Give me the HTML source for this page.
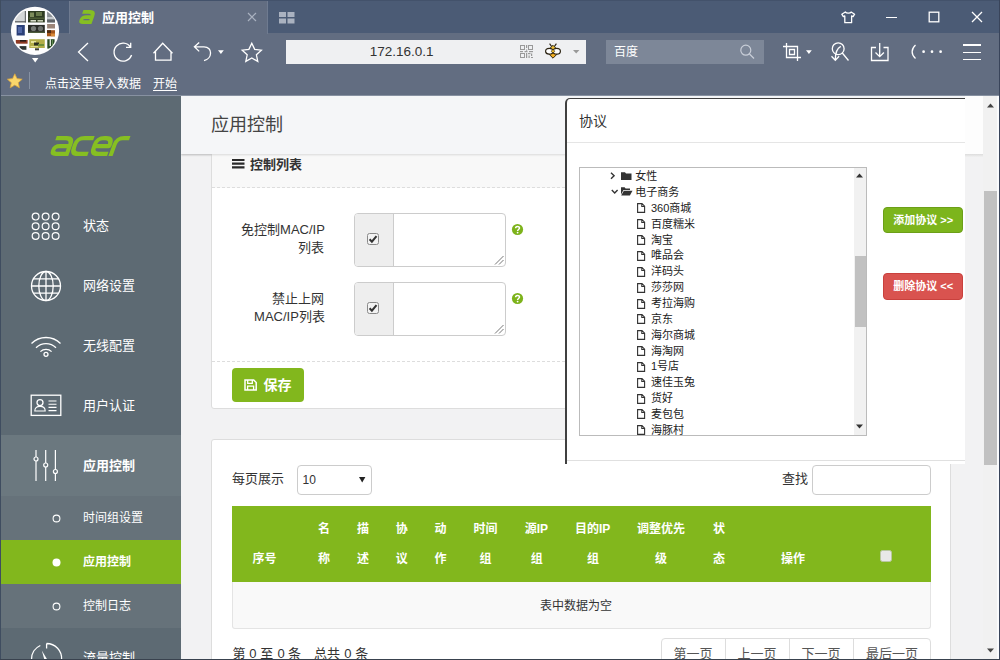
<!DOCTYPE html>
<html><head><meta charset="utf-8"><title>应用控制</title>
<style>
html,body{margin:0;padding:0}
body{width:1000px;height:660px;overflow:hidden;position:relative;background:#f1f1f1;font-family:"Liberation Sans","Noto Sans CJK SC",sans-serif}
#root{position:absolute;left:0;top:0;width:1000px;height:660px;overflow:hidden}
#root div,#root svg{position:absolute;display:block}
.t{white-space:nowrap;font-family:"Liberation Sans","Noto Sans CJK SC",sans-serif}
.t>span{position:absolute;left:0;top:0;white-space:nowrap}
</style></head><body>
<div id="root">
<div style="left:0px;top:96px;width:1000px;height:564px;background:#f2f2f3;"></div>
<div style="left:181px;top:96px;width:802px;height:58px;background:#f5f6f8;box-shadow:0 1px 2px rgba(0,0,0,.12);"></div>
<div class="t" style="left:211.00px;top:115.50px;font-size:18.00px;line-height:18.00px;color:#444;"><span>应用控制</span></div>
<div style="left:211px;top:140px;width:740px;height:269px;background:#fff;border:1px solid #ddd;border-radius:3px;box-sizing:border-box;"></div>
<div style="left:212px;top:154px;width:738px;height:34px;background:#f8f8f8;"></div>
<div style="left:212px;top:187px;width:738px;height:0px;border-top:1px dashed #ddd;"></div>
<div style="left:212px;top:361px;width:738px;height:0px;border-top:1px dashed #ddd;"></div>
<div style="left:181px;top:96px;width:802px;height:58px;background:#f5f6f8;box-shadow:0 1px 2px rgba(0,0,0,.12);"></div>
<div class="t" style="left:211.00px;top:115.50px;font-size:18.00px;line-height:18.00px;color:#444;"><span>应用控制</span></div>
<svg style="left:232px;top:159px;" width="13" height="10" viewBox="0 0 13 10"><path d="M0 1h12.5M0 4.7h12.5M0 8.4h12.5" stroke="#2a2a2a" stroke-width="2.200"/></svg>
<div class="t" style="left:250.00px;top:158.00px;font-size:13.00px;line-height:13.00px;color:#333;font-weight:bold;"><span>控制列表</span></div>
<div class="t" style="left:241.11px;top:222.50px;font-size:13.00px;line-height:13.00px;color:#333;"><span>免控制MAC/IP</span></div>
<div class="t" style="left:298.00px;top:240.50px;font-size:13.00px;line-height:13.00px;color:#333;"><span>列表</span></div>
<div class="t" style="left:272.00px;top:291.50px;font-size:13.00px;line-height:13.00px;color:#333;"><span>禁止上网</span></div>
<div class="t" style="left:254.11px;top:309.50px;font-size:13.00px;line-height:13.00px;color:#333;"><span>MAC/IP列表</span></div>
<div style="left:354px;top:213px;width:152px;height:54px;background:#fff;border:1px solid #ccc;border-radius:4px;box-sizing:border-box;"></div>
<div style="left:355px;top:214px;width:37.5px;height:52px;background:#eee;border-right:1px solid #ccc;border-radius:3px 0 0 3px;"></div>
<svg style="left:367px;top:233px;" width="12" height="12" viewBox="0 0 12 12"><rect x=".5" y=".5" width="11" height="11" rx="2" fill="#f3f3f3" stroke="#8a8a8a"/><path d="M2.6 6.2l2.3 2.5 4.6-5.6" fill="none" stroke="#333" stroke-width="2"/></svg>
<svg style="left:494px;top:255px;" width="10" height="10" viewBox="0 0 10 10"><path d="M1 9.5L9.5 1M5 9.5L9.5 5" stroke="#777" stroke-width="1"/></svg>
<svg style="left:511px;top:223px;" width="13" height="13" viewBox="0 0 13 13"><circle cx="6.5" cy="6.5" r="5.6" fill="#7db31b"/><path d="M4.6 5.2c0-2.4 3.9-2.4 3.9-.1 0 1.4-1.9 1.4-1.9 2.8" fill="none" stroke="#fff" stroke-width="1.5"/><circle cx="6.6" cy="9.6" r=".9" fill="#fff"/></svg>
<div style="left:354px;top:282px;width:152px;height:54px;background:#fff;border:1px solid #ccc;border-radius:4px;box-sizing:border-box;"></div>
<div style="left:355px;top:283px;width:37.5px;height:52px;background:#eee;border-right:1px solid #ccc;border-radius:3px 0 0 3px;"></div>
<svg style="left:367px;top:302px;" width="12" height="12" viewBox="0 0 12 12"><rect x=".5" y=".5" width="11" height="11" rx="2" fill="#f3f3f3" stroke="#8a8a8a"/><path d="M2.6 6.2l2.3 2.5 4.6-5.6" fill="none" stroke="#333" stroke-width="2"/></svg>
<svg style="left:494px;top:324px;" width="10" height="10" viewBox="0 0 10 10"><path d="M1 9.5L9.5 1M5 9.5L9.5 5" stroke="#777" stroke-width="1"/></svg>
<svg style="left:511px;top:292px;" width="13" height="13" viewBox="0 0 13 13"><circle cx="6.5" cy="6.5" r="5.6" fill="#7db31b"/><path d="M4.6 5.2c0-2.4 3.9-2.4 3.9-.1 0 1.4-1.9 1.4-1.9 2.8" fill="none" stroke="#fff" stroke-width="1.5"/><circle cx="6.6" cy="9.6" r=".9" fill="#fff"/></svg>
<div style="left:232px;top:368px;width:72px;height:34px;background:#82b71d;border-radius:4px;"></div>
<svg style="left:244px;top:379px;" width="14" height="12" viewBox="0 0 14 12"><path d="M1 1h8.700l2.500 2.500v7.500h-11.200z" fill="none" stroke="#fff" stroke-width="1.500"/><path d="M3.700 1v3.300h4.600v-3.300M3.600 11v-3.800h6v3.800" fill="none" stroke="#fff" stroke-width="1.300"/></svg>
<div class="t" style="left:263.50px;top:378.00px;font-size:14.00px;line-height:14.00px;color:#fff;font-weight:bold;"><span>保存</span></div>
<div style="left:211px;top:439px;width:740px;height:260px;background:#fff;border:1px solid #ddd;border-radius:3px;box-sizing:border-box;"></div>
<div class="t" style="left:232.00px;top:471.50px;font-size:13.00px;line-height:13.00px;color:#333;"><span>每页展示</span></div>
<div style="left:297px;top:465px;width:75px;height:30px;background:#fff;border:1px solid #ccc;border-radius:4px;box-sizing:border-box;"></div>
<div class="t" style="left:302.50px;top:474.00px;font-size:12.00px;line-height:12.00px;color:#333;"><span>10</span></div>
<svg style="left:359px;top:477px;" width="7" height="6" viewBox="0 0 7 6"><path d="M0 0h6.400L3.200 5.600z" fill="#222"/></svg>
<div class="t" style="left:782.00px;top:471.50px;font-size:13.00px;line-height:13.00px;color:#333;"><span>查找</span></div>
<div style="left:812px;top:465px;width:119px;height:30px;background:#fff;border:1px solid #ccc;border-radius:4px;box-sizing:border-box;"></div>
<div style="left:232px;top:506px;width:699px;height:76px;background:#82b71d;"></div>
<div style="left:232px;top:582px;width:699px;height:47px;background:#f9f9f9;border:1px solid #e4e4e4;border-top:0;box-sizing:border-box;border-radius:0 0 3px 3px;"></div>
<div class="t" style="left:252.60px;top:552.50px;font-size:12.00px;line-height:12.00px;color:#fff;font-weight:bold;"><span>序号</span></div>
<div class="t" style="left:318.00px;top:522.50px;font-size:12.00px;line-height:12.00px;color:#fff;font-weight:bold;"><span>名</span></div>
<div class="t" style="left:318.00px;top:552.50px;font-size:12.00px;line-height:12.00px;color:#fff;font-weight:bold;"><span>称</span></div>
<div class="t" style="left:357.00px;top:522.50px;font-size:12.00px;line-height:12.00px;color:#fff;font-weight:bold;"><span>描</span></div>
<div class="t" style="left:357.00px;top:552.50px;font-size:12.00px;line-height:12.00px;color:#fff;font-weight:bold;"><span>述</span></div>
<div class="t" style="left:395.70px;top:522.50px;font-size:12.00px;line-height:12.00px;color:#fff;font-weight:bold;"><span>协</span></div>
<div class="t" style="left:395.70px;top:552.50px;font-size:12.00px;line-height:12.00px;color:#fff;font-weight:bold;"><span>议</span></div>
<div class="t" style="left:434.60px;top:522.50px;font-size:12.00px;line-height:12.00px;color:#fff;font-weight:bold;"><span>动</span></div>
<div class="t" style="left:434.60px;top:552.50px;font-size:12.00px;line-height:12.00px;color:#fff;font-weight:bold;"><span>作</span></div>
<div class="t" style="left:473.60px;top:522.50px;font-size:12.00px;line-height:12.00px;color:#fff;font-weight:bold;"><span>时间</span></div>
<div class="t" style="left:479.60px;top:552.50px;font-size:12.00px;line-height:12.00px;color:#fff;font-weight:bold;"><span>组</span></div>
<div class="t" style="left:524.72px;top:522.50px;font-size:12.00px;line-height:12.00px;color:#fff;font-weight:bold;"><span>源IP</span></div>
<div class="t" style="left:530.70px;top:552.50px;font-size:12.00px;line-height:12.00px;color:#fff;font-weight:bold;"><span>组</span></div>
<div class="t" style="left:575.02px;top:522.50px;font-size:12.00px;line-height:12.00px;color:#fff;font-weight:bold;"><span>目的IP</span></div>
<div class="t" style="left:587.00px;top:552.50px;font-size:12.00px;line-height:12.00px;color:#fff;font-weight:bold;"><span>组</span></div>
<div class="t" style="left:637.00px;top:522.50px;font-size:12.00px;line-height:12.00px;color:#fff;font-weight:bold;"><span>调整优先</span></div>
<div class="t" style="left:655.00px;top:552.50px;font-size:12.00px;line-height:12.00px;color:#fff;font-weight:bold;"><span>级</span></div>
<div class="t" style="left:713.00px;top:522.50px;font-size:12.00px;line-height:12.00px;color:#fff;font-weight:bold;"><span>状</span></div>
<div class="t" style="left:713.00px;top:552.50px;font-size:12.00px;line-height:12.00px;color:#fff;font-weight:bold;"><span>态</span></div>
<div class="t" style="left:781.00px;top:552.50px;font-size:12.00px;line-height:12.00px;color:#fff;font-weight:bold;"><span>操作</span></div>
<svg style="left:880px;top:550px;" width="12" height="12" viewBox="0 0 12 12"><rect x=".5" y=".5" width="11" height="11" rx="2" fill="#e8e8e8" stroke="#b9c7a0"/></svg>
<div class="t" style="left:540.00px;top:600.00px;font-size:12.00px;line-height:12.00px;color:#333;"><span>表中数据为空</span></div>
<div class="t" style="left:232.50px;top:646.50px;font-size:13.00px;line-height:13.00px;color:#333;"><span>第</span></div>
<div class="t" style="left:249.30px;top:646.50px;font-size:13.00px;line-height:13.00px;color:#333;"><span>0</span></div>
<div class="t" style="left:260.30px;top:646.50px;font-size:13.00px;line-height:13.00px;color:#333;"><span>至</span></div>
<div class="t" style="left:277.50px;top:646.50px;font-size:13.00px;line-height:13.00px;color:#333;"><span>0</span></div>
<div class="t" style="left:288.00px;top:646.50px;font-size:13.00px;line-height:13.00px;color:#333;"><span>条</span></div>
<div class="t" style="left:314.00px;top:646.50px;font-size:13.00px;line-height:13.00px;color:#333;"><span>总共</span></div>
<div class="t" style="left:344.20px;top:646.50px;font-size:13.00px;line-height:13.00px;color:#333;"><span>0</span></div>
<div class="t" style="left:355.30px;top:646.50px;font-size:13.00px;line-height:13.00px;color:#333;"><span>条</span></div>
<div style="left:661px;top:638px;width:270px;height:34px;background:#fff;border:1px solid #ddd;border-radius:4px;box-sizing:border-box;"></div>
<div style="left:725px;top:639px;width:1px;height:32px;background:#ddd;"></div>
<div style="left:789px;top:639px;width:1px;height:32px;background:#ddd;"></div>
<div style="left:853px;top:639px;width:1px;height:32px;background:#ddd;"></div>
<div class="t" style="left:673.50px;top:646.50px;font-size:13.00px;line-height:13.00px;color:#555;"><span>第一页</span></div>
<div class="t" style="left:737.50px;top:646.50px;font-size:13.00px;line-height:13.00px;color:#555;"><span>上一页</span></div>
<div class="t" style="left:801.50px;top:646.50px;font-size:13.00px;line-height:13.00px;color:#555;"><span>下一页</span></div>
<div class="t" style="left:866.00px;top:646.50px;font-size:13.00px;line-height:13.00px;color:#555;"><span>最后一页</span></div>
<div style="left:0px;top:96px;width:181px;height:564px;background:#5d6a73;"></div>
<div style="left:0px;top:435px;width:181px;height:61px;background:#6b787f;"></div>
<div style="left:0px;top:496px;width:181px;height:132px;background:#66727a;"></div>
<div style="left:0px;top:540px;width:181px;height:44px;background:#82b71d;"></div>
<svg style="left:49.3px;top:136px;overflow:visible;" width="86.9" height="20" viewBox="0 0 86.9 20"><g transform="translate(7.3,0) scale(1) skewX(-20)" fill="none" stroke="#86bf22" stroke-width="4.2" stroke-linejoin="round"><path d="M0.5 2.1H10.6Q17.1 2.1 17.1 8.6V20M17.1 10.2H6.6Q2.1 10.2 2.1 14.05Q2.1 17.9 6.6 17.9H17.1"/><path d="M38.4 2.1H28.4Q21.9 2.1 21.9 8.6V11.4Q21.9 17.9 28.4 17.9H38.2"/><path d="M41.7 10.2H56.7V8.6Q56.7 2.1 50.2 2.1H48.2Q41.7 2.1 41.7 8.6V11.4Q41.7 17.9 48.2 17.9H58"/><path d="M61.5 20V8.6Q61.5 2.1 68 2.1H74.2"/></g></svg>
<svg style="left:31px;top:211.5px;" width="30" height="30" viewBox="0 0 30 30"><g fill="none" stroke="#fff" stroke-width="1.2"><circle cx="4.6" cy="4.6" r="3.4"/><circle cx="4.6" cy="14.3" r="3.4"/><circle cx="4.6" cy="24" r="3.4"/><circle cx="14.6" cy="4.6" r="3.4"/><circle cx="14.6" cy="14.3" r="3.4"/><circle cx="14.6" cy="24" r="3.4"/><circle cx="24.6" cy="4.6" r="3.4"/><circle cx="24.6" cy="14.3" r="3.4"/><circle cx="24.6" cy="24" r="3.4"/></g></svg>
<div class="t" style="left:83.00px;top:219.00px;font-size:13.00px;line-height:13.00px;color:#fff;"><span>状态</span></div>
<svg style="left:30px;top:269.5px;" width="32" height="32" viewBox="0 0 32 32"><g fill="none" stroke="#fff" stroke-width="1.3"><circle cx="16" cy="16" r="14.5"/><ellipse cx="16" cy="16" rx="7.2" ry="14.5"/><path d="M16 1.5v29M1.5 16h29M3.8 8.800h24.400M3.800 23.200h24.400"/></g></svg>
<div class="t" style="left:83.00px;top:279.00px;font-size:13.00px;line-height:13.00px;color:#fff;"><span>网络设置</span></div>
<svg style="left:30px;top:334px;" width="32" height="24" viewBox="0 0 32 24"><g fill="none" stroke="#fff" stroke-width="1.3"><path d="M1.5 9.5a20.5 20.5 0 0 1 29 0M6 13.7a14.2 14.2 0 0 1 20 0M10.4 17.6a8 8 0 0 1 11.2 0"/><circle cx="16" cy="20.3" r="2"/></g></svg>
<div class="t" style="left:83.00px;top:339.00px;font-size:13.00px;line-height:13.00px;color:#fff;"><span>无线配置</span></div>
<svg style="left:30px;top:394px;" width="32" height="23" viewBox="0 0 32 23"><g fill="none" stroke="#fff" stroke-width="1.3"><rect x="1.2" y="1.2" width="29.6" height="20.2"/><circle cx="10" cy="8.6" r="3"/><path d="M4.8 17c0-3.5 2.2-4.6 5.2-4.6s5.200 1.100 5.200 4.600zM18.500 7h8M18.500 10.200h8M18.500 13.400h8M18.500 16.600h8" stroke-width="1.1"/></g></svg>
<div class="t" style="left:83.00px;top:399.00px;font-size:13.00px;line-height:13.00px;color:#fff;"><span>用户认证</span></div>
<svg style="left:31px;top:449px;" width="30" height="33" viewBox="0 0 30 33"><g fill="none" stroke="#fff" stroke-width="1.2"><path d="M5 1v7M5 12v20M14.700 1v13M14.700 18v14M24.400 1v19.500M24.400 24.500v7.500"/><circle cx="5" cy="10" r="2"/><circle cx="14.700" cy="16" r="2"/><circle cx="24.400" cy="22.500" r="2"/></g></svg>
<div class="t" style="left:83.00px;top:459.00px;font-size:13.00px;line-height:13.00px;color:#fff;font-weight:bold;"><span>应用控制</span></div>
<svg style="left:52px;top:513.5px;" width="9" height="9" viewBox="0 0 9 9"><circle cx="4.5" cy="4.5" r="3.4" fill="none" stroke="#fff" stroke-width="1.1"/></svg>
<div class="t" style="left:83.00px;top:512.00px;font-size:12.00px;line-height:12.00px;color:#fff;"><span>时间组设置</span></div>
<svg style="left:52px;top:557.5px;" width="9" height="9" viewBox="0 0 9 9"><circle cx="4.5" cy="4.5" r="4" fill="#fff"/></svg>
<div class="t" style="left:83.00px;top:556.00px;font-size:12.00px;line-height:12.00px;color:#fff;font-weight:bold;"><span>应用控制</span></div>
<svg style="left:52px;top:601.5px;" width="9" height="9" viewBox="0 0 9 9"><circle cx="4.5" cy="4.5" r="3.4" fill="none" stroke="#fff" stroke-width="1.1"/></svg>
<div class="t" style="left:83.00px;top:600.00px;font-size:12.00px;line-height:12.00px;color:#fff;"><span>控制日志</span></div>
<svg style="left:30px;top:641px;" width="33" height="19" viewBox="0 0 33 19"><g fill="none" stroke="#fff" stroke-width="1.3"><path d="M1.500 18.500A15 15 0 0 1 10.300 4.500M16.600 2.500v5M16.600 2.500A15 15 0 0 1 31.600 18.500"/><path d="M11.800 9.500l5.700 9.500h-3z" fill="#fff" stroke="none"/></g></svg>
<div class="t" style="left:83.00px;top:650.80px;font-size:13.00px;line-height:13.00px;color:#fff;"><span>流量控制</span></div>
<div style="left:565px;top:98px;width:400px;height:366px;background:#fff;border-left:2px solid #404040;border-top:1px solid #404040;border-radius:5px 0 0 0;box-sizing:border-box;"></div>
<div style="left:567px;top:142px;width:398px;height:1px;background:#e5e5e5;"></div>
<div style="left:567px;top:460px;width:398px;height:1px;background:#e0e0e0;"></div>
<div class="t" style="left:579.00px;top:113.50px;font-size:14.00px;line-height:14.00px;color:#333;"><span>协议</span></div>
<div style="left:579px;top:167px;width:288px;height:269px;background:#fff;border:1px solid #bbb;box-sizing:border-box;"></div>
<div style="left:854px;top:168px;width:12px;height:267px;background:#f1f1f1;"></div>
<div style="left:855px;top:256px;width:11px;height:71px;background:#c1c1c1;"></div>
<svg style="left:856px;top:173px;" width="8" height="5" viewBox="0 0 8 5"><path d="M0 4.500h7L3.500 .5z" fill="#333"/></svg>
<svg style="left:856px;top:424px;" width="8" height="5" viewBox="0 0 8 5"><path d="M0 .5h7L3.500 4.500z" fill="#333"/></svg>
<div style="left:580px;top:168px;width:274px;height:267px;overflow:hidden">
<svg style="left:30.3px;top:4px;" width="6" height="8" viewBox="0 0 6 8"><path d="M1 .8l3.100 3l-3.100 3" fill="none" stroke="#333" stroke-width="1.4"/></svg>
<svg style="left:41.2px;top:2.7px;" width="12" height="10" viewBox="0 0 12 10"><path d="M0 1.200h4l1 1.300h5.500v6.500h-10.500z" fill="#333"/></svg>
<div class="t" style="left:55.30px;top:3.20px;font-size:11.00px;line-height:11.00px;color:#222;"><span>女性</span></div>
<svg style="left:31.2px;top:21.15px;" width="8" height="6" viewBox="0 0 8 6"><path d="M.8 1l2.900 3l2.900 -3" fill="none" stroke="#333" stroke-width="1.4"/></svg>
<svg style="left:41px;top:18.25px;" width="12" height="10" viewBox="0 0 12 10"><path d="M0 1.200h3.600l1 1.300h4.400v1.500h-6.500l-2.500 4.500z" fill="#333"/><path d="M2.800 4.800h8.700l-2.600 4.700h-8.700z" fill="#333"/></svg>
<div class="t" style="left:55.30px;top:19.05px;font-size:11.00px;line-height:11.00px;color:#222;"><span>电子商务</span></div>
<svg style="left:57px;top:35.4px;" width="9" height="11" viewBox="0 0 9 11"><path d="M.6 .6h4.400l2.600 2.600v6.200h-7zM4.800 .8v2.700h2.700" fill="none" stroke="#333" stroke-width="1.1"/></svg>
<div class="t" style="left:71.00px;top:34.90px;font-size:11.00px;line-height:11.00px;color:#222;"><span>360商城</span></div>
<svg style="left:57px;top:51.25px;" width="9" height="11" viewBox="0 0 9 11"><path d="M.6 .6h4.400l2.600 2.600v6.200h-7zM4.800 .8v2.700h2.700" fill="none" stroke="#333" stroke-width="1.1"/></svg>
<div class="t" style="left:71.00px;top:50.75px;font-size:11.00px;line-height:11.00px;color:#222;"><span>百度糯米</span></div>
<svg style="left:57px;top:67.1px;" width="9" height="11" viewBox="0 0 9 11"><path d="M.6 .6h4.400l2.600 2.600v6.200h-7zM4.800 .8v2.700h2.700" fill="none" stroke="#333" stroke-width="1.1"/></svg>
<div class="t" style="left:71.00px;top:66.60px;font-size:11.00px;line-height:11.00px;color:#222;"><span>淘宝</span></div>
<svg style="left:57px;top:82.95px;" width="9" height="11" viewBox="0 0 9 11"><path d="M.6 .6h4.400l2.600 2.600v6.200h-7zM4.800 .8v2.700h2.700" fill="none" stroke="#333" stroke-width="1.1"/></svg>
<div class="t" style="left:71.00px;top:82.45px;font-size:11.00px;line-height:11.00px;color:#222;"><span>唯品会</span></div>
<svg style="left:57px;top:98.8px;" width="9" height="11" viewBox="0 0 9 11"><path d="M.6 .6h4.400l2.600 2.600v6.200h-7zM4.800 .8v2.700h2.700" fill="none" stroke="#333" stroke-width="1.1"/></svg>
<div class="t" style="left:71.00px;top:98.30px;font-size:11.00px;line-height:11.00px;color:#222;"><span>洋码头</span></div>
<svg style="left:57px;top:114.65px;" width="9" height="11" viewBox="0 0 9 11"><path d="M.6 .6h4.400l2.600 2.600v6.200h-7zM4.800 .8v2.700h2.700" fill="none" stroke="#333" stroke-width="1.1"/></svg>
<div class="t" style="left:71.00px;top:114.15px;font-size:11.00px;line-height:11.00px;color:#222;"><span>莎莎网</span></div>
<svg style="left:57px;top:130.5px;" width="9" height="11" viewBox="0 0 9 11"><path d="M.6 .6h4.400l2.600 2.600v6.200h-7zM4.800 .8v2.700h2.700" fill="none" stroke="#333" stroke-width="1.1"/></svg>
<div class="t" style="left:71.00px;top:130.00px;font-size:11.00px;line-height:11.00px;color:#222;"><span>考拉海购</span></div>
<svg style="left:57px;top:146.35px;" width="9" height="11" viewBox="0 0 9 11"><path d="M.6 .6h4.400l2.600 2.600v6.200h-7zM4.800 .8v2.700h2.700" fill="none" stroke="#333" stroke-width="1.1"/></svg>
<div class="t" style="left:71.00px;top:145.85px;font-size:11.00px;line-height:11.00px;color:#222;"><span>京东</span></div>
<svg style="left:57px;top:162.2px;" width="9" height="11" viewBox="0 0 9 11"><path d="M.6 .6h4.400l2.600 2.600v6.200h-7zM4.800 .8v2.700h2.700" fill="none" stroke="#333" stroke-width="1.1"/></svg>
<div class="t" style="left:71.00px;top:161.70px;font-size:11.00px;line-height:11.00px;color:#222;"><span>海尔商城</span></div>
<svg style="left:57px;top:178.05px;" width="9" height="11" viewBox="0 0 9 11"><path d="M.6 .6h4.400l2.600 2.600v6.200h-7zM4.800 .8v2.700h2.700" fill="none" stroke="#333" stroke-width="1.1"/></svg>
<div class="t" style="left:71.00px;top:177.55px;font-size:11.00px;line-height:11.00px;color:#222;"><span>海淘网</span></div>
<svg style="left:57px;top:193.9px;" width="9" height="11" viewBox="0 0 9 11"><path d="M.6 .6h4.400l2.600 2.600v6.200h-7zM4.800 .8v2.700h2.700" fill="none" stroke="#333" stroke-width="1.1"/></svg>
<div class="t" style="left:71.00px;top:193.40px;font-size:11.00px;line-height:11.00px;color:#222;"><span>1号店</span></div>
<svg style="left:57px;top:209.75px;" width="9" height="11" viewBox="0 0 9 11"><path d="M.6 .6h4.400l2.600 2.600v6.200h-7zM4.800 .8v2.700h2.700" fill="none" stroke="#333" stroke-width="1.1"/></svg>
<div class="t" style="left:71.00px;top:209.25px;font-size:11.00px;line-height:11.00px;color:#222;"><span>速佳玉兔</span></div>
<svg style="left:57px;top:225.6px;" width="9" height="11" viewBox="0 0 9 11"><path d="M.6 .6h4.400l2.600 2.600v6.200h-7zM4.800 .8v2.700h2.700" fill="none" stroke="#333" stroke-width="1.1"/></svg>
<div class="t" style="left:71.00px;top:225.10px;font-size:11.00px;line-height:11.00px;color:#222;"><span>货好</span></div>
<svg style="left:57px;top:241.45px;" width="9" height="11" viewBox="0 0 9 11"><path d="M.6 .6h4.400l2.600 2.600v6.200h-7zM4.800 .8v2.700h2.700" fill="none" stroke="#333" stroke-width="1.1"/></svg>
<div class="t" style="left:71.00px;top:240.95px;font-size:11.00px;line-height:11.00px;color:#222;"><span>麦包包</span></div>
<svg style="left:57px;top:257.3px;" width="9" height="11" viewBox="0 0 9 11"><path d="M.6 .6h4.400l2.600 2.600v6.200h-7zM4.800 .8v2.700h2.700" fill="none" stroke="#333" stroke-width="1.1"/></svg>
<div class="t" style="left:71.00px;top:256.80px;font-size:11.00px;line-height:11.00px;color:#222;"><span>海豚村</span></div>
</div>
<div style="left:883px;top:207px;width:80px;height:26px;background:#7cb51c;border:1px solid #6c9f18;border-radius:4px;box-sizing:border-box;"></div>
<div class="t" style="left:893.26px;top:214.50px;font-size:11.00px;line-height:11.00px;color:#fff;font-weight:bold;"><span>添加协议 &gt;&gt;</span></div>
<div style="left:883px;top:273px;width:80px;height:27px;background:#d9534f;border:1px solid #c9413d;border-radius:4px;box-sizing:border-box;"></div>
<div class="t" style="left:893.26px;top:281.00px;font-size:11.00px;line-height:11.00px;color:#fff;font-weight:bold;"><span>删除协议 &lt;&lt;</span></div>
<div style="left:965px;top:96px;width:18px;height:58px;background:#fdfdfd;"></div>
<div style="left:965px;top:154px;width:18px;height:3px;background:linear-gradient(#dcdcdc,#f1f1f1);"></div>
<div style="left:983px;top:96px;width:15px;height:564px;background:#f1f1f1;"></div>
<div style="left:984px;top:191px;width:13px;height:274px;background:#c1c1c1;"></div>
<svg style="left:987px;top:102.5px;" width="8" height="5" viewBox="0 0 8 5"><path d="M0 4.500h7L3.500 .5z" fill="#444"/></svg>
<svg style="left:987px;top:647.5px;" width="8" height="5" viewBox="0 0 8 5"><path d="M0 .5h7L3.500 4.500z" fill="#444"/></svg>
<div style="left:0px;top:0px;width:1000px;height:33px;background:#4b5b75;"></div>
<div style="left:0px;top:33px;width:1000px;height:63px;background:#626d81;"></div>
<div style="left:69px;top:1px;width:199px;height:33px;background:#626d81;border-left:1px solid #6f7b90;border-right:1px solid #6f7b90;box-sizing:border-box;"></div>
<svg style="left:78.3px;top:10px;overflow:visible;" width="19.55" height="14" viewBox="0 0 19.55 14"><g transform="translate(5.11,0) scale(0.7) skewX(-20)" fill="none" stroke="#86bf22" stroke-width="5.2" stroke-linejoin="round"><path d="M0.5 2.6H10.1Q16.6 2.6 16.6 9.1V20M16.6 10.2H7.1Q2.6 10.2 2.6 13.8Q2.6 17.4 7.1 17.4H16.6"/></g></svg>
<div class="t" style="left:102.00px;top:11.00px;font-size:13.00px;line-height:13.00px;color:#fff;font-weight:bold;"><span>应用控制</span></div>
<svg style="left:247px;top:12px;" width="10" height="10" viewBox="0 0 10 10"><path d="M1 1l8 8M9 1l-8 8" stroke="#aab2c0" stroke-width="1.2"/></svg>
<svg style="left:279px;top:11.5px;" width="16" height="12" viewBox="0 0 16 12"><g fill="#aab2c0"><rect x="0" y="0" width="7" height="5"/><rect x="8.500" y="0" width="7" height="5"/><rect x="0" y="6.500" width="7" height="5"/><rect x="8.500" y="6.500" width="7" height="5"/></g></svg>
<svg style="left:840.5px;top:10.5px;" width="15" height="13" viewBox="0 0 15 13"><path d="M4.300 1l-3.500 2.200l1.500 2.400l1.500 -.7v6.800h6.800v-6.800l1.500 .7l1.500 -2.400l-3.500 -2.200c-.7 1.600 -4.600 1.600 -5.800 0z" fill="none" stroke="#fff" stroke-width="1.300" stroke-linejoin="round"/></svg>
<div style="left:886px;top:16.5px;width:10.5px;height:1.3px;background:#fff;"></div>
<svg style="left:928px;top:11px;" width="12" height="12" viewBox="0 0 12 12"><rect x="1.200" y="1.200" width="9.600" height="9.600" fill="none" stroke="#fff" stroke-width="1.300"/></svg>
<svg style="left:971px;top:11px;" width="12" height="12" viewBox="0 0 12 12"><path d="M1 1l10 10M11 1l-10 10" stroke="#fff" stroke-width="1.300"/></svg>
<svg style="left:10px;top:6px;" width="50" height="50" viewBox="0 0 50 50"><defs><clipPath id="avc"><circle cx="25" cy="24.800" r="22.800"/></clipPath></defs><circle cx="25" cy="24.800" r="24.100" fill="#fdfdfe"/><g clip-path="url(#avc)"><rect x="5" y="5" width="11" height="11.4" fill="#d3d6d8"/><rect x="14.8" y="5" width="1.2" height="11.4" fill="#6a6d70"/><rect x="5" y="15.2" width="11" height="1.2" fill="#5a5d60"/><rect x="18" y="5" width="16.8" height="11.4" fill="#2e3b22"/><rect x="20" y="6.5" width="4" height="4.5" fill="#7d8c5c"/><rect x="26" y="6" width="6" height="4" fill="#66774a"/><rect x="19" y="11.5" width="15" height="1.5" fill="#4c5c36"/><rect x="20.5" y="14" width="5.5" height="1.6" fill="#d7dccb"/><rect x="27.5" y="14" width="5.5" height="1.6" fill="#c5ccb4"/><rect x="37.1" y="5" width="7.9" height="11.4" fill="#8b9095"/><rect x="37.1" y="11" width="7.9" height="2.5" fill="#c4c8cc"/><rect x="37.1" y="13.5" width="7.9" height="2.9" fill="#5f6468"/><rect x="6.6" y="19" width="8.2" height="10.5" fill="#2b4079"/><rect x="8" y="21" width="4" height="6" fill="#4f66a6"/><rect x="18" y="18.9" width="16.8" height="8.1" fill="#2a2c28"/><circle cx="23.500" cy="22.500" r="2.600" fill="#777b78"/><circle cx="30.500" cy="22.500" r="2.600" fill="#6c706d"/><rect x="18" y="25.6" width="16.8" height="1.4" fill="#4b5a3b"/><rect x="37.1" y="18" width="7.9" height="4.5" fill="#9b8579"/><rect x="37" y="24.2" width="8" height="6.1" fill="#a3551c"/><rect x="37" y="24.2" width="4" height="2.8" fill="#4a2c16"/><rect x="41" y="27.5" width="4" height="2.8" fill="#d98b3a"/><rect x="5.8" y="34" width="11.8" height="3.7" fill="#8e3a23"/><rect x="10" y="34" width="6" height="1.6" fill="#2a1c18"/><rect x="9.5" y="40.1" width="6.9" height="3.7" fill="#2d3431"/><rect x="19.3" y="33.2" width="15.5" height="8.8" fill="#b3ae49"/><rect x="21" y="35" width="5" height="2" fill="#e6e39a"/><rect x="24" y="36.5" width="5" height="3" fill="#2c3020"/><rect x="28" y="38" width="6" height="2" fill="#6f8f3a"/><rect x="20.5" y="40" width="7.500" height="1.2" fill="#e0dc8c"/><rect x="25" y="42.3" width="4" height="2" fill="#3a3d36"/><rect x="37.3" y="33.2" width="7.3" height="9.4" fill="#2a4a25"/><rect x="39.6" y="33.2" width="1.4" height="6.8" fill="#dfe8d8"/><rect x="42" y="34" width="1" height="8" fill="#5f8a4f"/></g></svg>
<svg style="left:31.5px;top:57.5px;" width="7" height="5" viewBox="0 0 7 5"><path d="M0 0h6.400L3.200 4.400z" fill="#fff"/></svg>
<svg style="left:76px;top:41px;" width="14" height="22" viewBox="0 0 14 22"><path d="M12 2L2.500 11L12 20" fill="none" stroke="#fff" stroke-width="1.300"/></svg>
<svg style="left:112px;top:41px;" width="22" height="22" viewBox="0 0 22 22"><path d="M18.500 6.100A9 9 0 1 0 19.600 14M18.700 1.800v4.500h-4.700" fill="none" stroke="#fff" stroke-width="1.300"/></svg>
<svg style="left:152px;top:41px;" width="22" height="21" viewBox="0 0 22 21"><path d="M1.500 12.200L10.700 2.300L20.500 12.200M3.500 10.500v8.700h15.500v-8.700" fill="none" stroke="#fff" stroke-width="1.300"/></svg>
<svg style="left:192px;top:40px;" width="22" height="23" viewBox="0 0 22 23"><path d="M7.200 2.600L2.400 6.800L7.200 11.400M2.400 6.800h9.600c9 0 8.500 12 0 13.800" fill="none" stroke="#fff" stroke-width="1.300"/></svg>
<svg style="left:218px;top:50px;" width="7" height="5" viewBox="0 0 7 5"><path d="M0 .2h5.800L2.900 4z" fill="#fff"/></svg>
<svg style="left:240px;top:41px;" width="24" height="22" viewBox="0 0 24 22"><path d="M11.800 2.200l2.900 6.200l6.700 .8l-5 4.600l1.400 6.600l-6 -3.400l-6 3.400l1.400 -6.600l-5 -4.600l6.700 -.8z" fill="none" stroke="#fff" stroke-width="1.300" stroke-linejoin="miter"/></svg>
<div style="left:286px;top:40px;width:300px;height:24px;background:#eff0f2;"></div>
<div class="t" style="left:369.65px;top:45.25px;font-size:13.50px;line-height:13.50px;color:#333;"><span>172.16.0.1</span></div>
<svg style="left:520px;top:45px;" width="13" height="13" viewBox="0 0 13 13"><g fill="none" stroke="#999" stroke-width="1"><rect x=".5" y=".5" width="4" height="4"/><rect x="8.500" y=".5" width="4" height="4"/><rect x=".5" y="8.500" width="4" height="4"/></g><g fill="#999"><rect x="6" y="0" width="1.200" height="3"/><rect x="6" y="4.500" width="1.200" height="1.200"/><rect x="0" y="6" width="3" height="1.200"/><rect x="4.500" y="6" width="3" height="1.200"/><rect x="9" y="6" width="4" height="1.200"/><rect x="6" y="8" width="1.200" height="5"/><rect x="8" y="8" width="2.500" height="1.200"/><rect x="11" y="8.500" width="1.200" height="2.500"/><rect x="8.500" y="10.500" width="1.200" height="2.500"/><rect x="11" y="12" width="2" height="1.200"/></g></svg>
<svg style="left:545px;top:43.3px;" width="16" height="16" viewBox="0 0 16 16"><path d="M4.600 .6l2.100 3M11.400 .6l-2.100 3" stroke="#2b2313" stroke-width="1.100" fill="none"/><path d="M8 2.300l3.100 3.100l-3.100 3.100l-3.100 -3.100z" fill="#f6c430" stroke="#2b2313" stroke-width="1" stroke-linejoin="round"/><path d="M8 7.800l3.700 3.700l-3.700 3.700l-3.700 -3.700z" fill="#f2ae22" stroke="#2b2313" stroke-width="1" stroke-linejoin="round"/><ellipse cx="4.300" cy="8.200" rx="3.700" ry="2.900" fill="#fff" stroke="#2b2313" stroke-width="1.200"/><ellipse cx="11.700" cy="8.200" rx="3.700" ry="2.900" fill="#fff" stroke="#2b2313" stroke-width="1.200"/><path d="M8 6.200l1.700 2l-1.700 2l-1.700 -2z" fill="#f6c430" stroke="#2b2313" stroke-width=".7"/></svg>
<svg style="left:573px;top:50px;" width="7" height="4" viewBox="0 0 7 4"><path d="M0 0h6.400L3.200 3.600z" fill="#999"/></svg>
<div style="left:606px;top:40px;width:158px;height:24px;background:#7d8798;"></div>
<div class="t" style="left:614.00px;top:45.80px;font-size:12.00px;line-height:12.00px;color:#fff;"><span>百度</span></div>
<svg style="left:738px;top:43px;" width="18" height="17" viewBox="0 0 18 17"><circle cx="7.800" cy="7.200" r="5" fill="none" stroke="#c9ced8" stroke-width="1.200"/><path d="M11.500 11l4.500 4.500" stroke="#c9ced8" stroke-width="1.200"/></svg>
<svg style="left:782px;top:42px;" width="20" height="20" viewBox="0 0 20 20"><path d="M4.500 1v14.500h14.500M1 4.500h14.500v14.500M7.500 7.500h5v5h-5z" fill="none" stroke="#fff" stroke-width="1.300"/></svg>
<svg style="left:806px;top:50px;" width="7" height="5" viewBox="0 0 7 5"><path d="M0 .2h5.800L2.900 4z" fill="#fff"/></svg>
<svg style="left:829px;top:42px;" width="21" height="20" viewBox="0 0 21 20"><circle cx="9.200" cy="6.700" r="5.900" fill="none" stroke="#fff" stroke-width="1.300"/><path d="M13.300 11l6.200 7.500M11.800 4.300C8 6 6.300 10 6.300 18M2.500 14.300l3.800 3.900l3.800 -3.900" fill="none" stroke="#fff" stroke-width="1.300"/></svg>
<svg style="left:870px;top:42px;" width="20" height="20" viewBox="0 0 20 20"><path d="M6 5.500h-4.500v13h16.500v-13h-4.500M9.700 1v13.500M5.500 10.500l4.200 4.200l4.200 -4.200" fill="none" stroke="#fff" stroke-width="1.300"/></svg>
<svg style="left:910px;top:44px;" width="34" height="16" viewBox="0 0 34 16"><path d="M5.500 1c-4.500 4 -4.500 9.500 0 13.500" fill="none" stroke="#fff" stroke-width="1.300"/><g fill="#fff"><circle cx="13.600" cy="7.700" r="1.350"/><circle cx="22" cy="7.700" r="1.350"/><circle cx="30.600" cy="7.700" r="1.350"/></g></svg>
<div style="left:963px;top:44.3px;width:18px;height:1.3px;background:#fff;"></div>
<div style="left:963px;top:51.8px;width:18px;height:1.3px;background:#fff;"></div>
<div style="left:963px;top:59.2px;width:18px;height:1.3px;background:#fff;"></div>
<svg style="left:7.2px;top:73.2px;" width="16" height="16" viewBox="0 0 16 16"><path d="M7.800 .8l2.200 4.800l5.200 .6l-3.900 3.500l1.100 5.100l-4.600 -2.700l-4.600 2.700l1.100 -5.100l-3.900 -3.500l5.200 -.6z" fill="#fad66b" stroke="#d9a53f" stroke-width=".8"/></svg>
<div style="left:29px;top:72px;width:1px;height:17px;background:#8691a3;"></div>
<div class="t" style="left:45.00px;top:78.00px;font-size:12.00px;line-height:12.00px;color:#fff;"><span>点击这里导入数据</span></div>
<div class="t" style="left:153.00px;top:78.00px;font-size:12.00px;line-height:12.00px;color:#fff;"><span>开始</span></div>
<div style="left:153px;top:89.5px;width:24px;height:1px;background:#fff;"></div>
<div style="left:0px;top:95px;width:1000px;height:1px;background:#8791a1;"></div>
<div style="left:997px;top:96px;width:2px;height:564px;background:#fafbfd;"></div>
<div style="left:0px;top:0px;width:1000px;height:1px;background:#43526b;"></div>
<div style="left:0px;top:0px;width:1px;height:660px;background:#3f4d60;"></div>
<div style="left:999px;top:0px;width:1px;height:660px;background:#39445a;"></div>
<div style="left:0px;top:659px;width:1000px;height:1px;background:#39424e;"></div>
</div>
</body></html>
